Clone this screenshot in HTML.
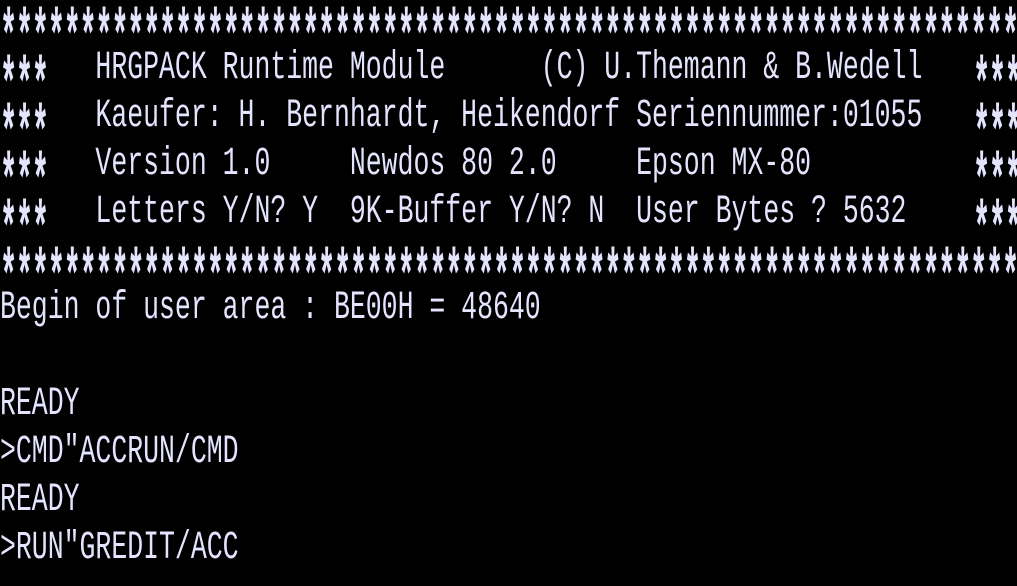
<!DOCTYPE html>
<html><head><meta charset="utf-8"><style>
html,body{margin:0;padding:0;background:#000;width:1017px;height:586px;overflow:hidden}
.l{position:absolute;left:0;height:30px;white-space:pre;font-family:"Liberation Mono",monospace;font-size:26.5px;line-height:26.5px;color:#e4e4ff;transform:scaleY(1.5);transform-origin:0 0}
.st{position:absolute;white-space:pre;font-family:"Liberation Mono",monospace;font-size:48px;line-height:48px;letter-spacing:-2.3px;font-weight:bold;color:#e4e4ff;transform:scale(0.6,1.5);transform-origin:0 0;margin-top:5px}
</style></head><body>
<div class="st" style="top:0px;left:0">****************************************************************</div>
<div class="st" style="top:240px;left:0">****************************************************************</div>
<div class="st" style="top:48px;left:0">***</div>
<div class="st" style="top:96px;left:0">***</div>
<div class="st" style="top:144px;left:0">***</div>
<div class="st" style="top:192px;left:0">***</div>
<div class="st" style="top:48px;left:973px">***</div>
<div class="st" style="top:96px;left:973px">***</div>
<div class="st" style="top:144px;left:973px">***</div>
<div class="st" style="top:192px;left:973px">***</div>
<div class="l" style="top:48px">      HRGPACK Runtime Module      (C) U.Themann &amp; B.Wedell</div>
<div class="l" style="top:96px">      Kaeufer: H. Bernhardt, Heikendorf Seriennummer:01055</div>
<div class="l" style="top:144px">      Version 1.0     Newdos 80 2.0     Epson MX-80</div>
<div class="l" style="top:192px">      Letters Y/N? Y  9K-Buffer Y/N? N  User Bytes ? 5632</div>
<div class="l" style="top:288px">Begin of user area : BE00H = 48640</div>
<div class="l" style="top:384px">READY</div>
<div class="l" style="top:432px">&gt;CMD"ACCRUN/CMD</div>
<div class="l" style="top:480px">READY</div>
<div class="l" style="top:528px">&gt;RUN"GREDIT/ACC</div>
</body></html>
